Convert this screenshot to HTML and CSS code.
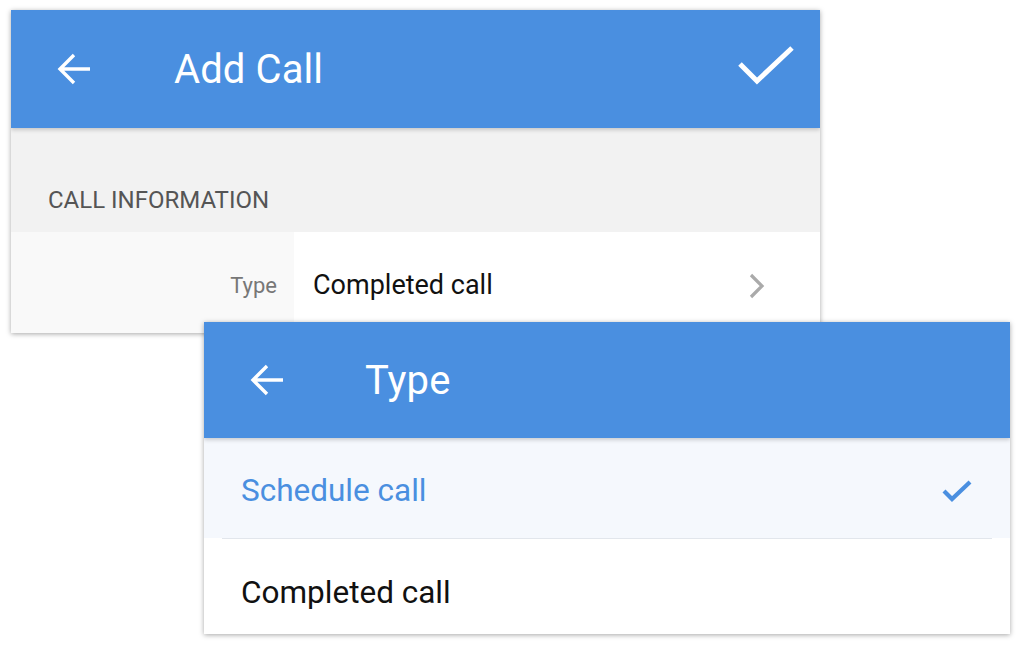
FILE: index.html
```html
<!DOCTYPE html>
<html>
<head>
<meta charset="utf-8">
<link rel="stylesheet" href="styles.css">
</head>
<body>
<div class="stage">
  <div class="card card-main">
    <div class="appbar">
      <svg class="icon-back" viewBox="0 0 36 36" width="36" height="36"><path d="M34 18H5M18 4L4 18l14 14" fill="none" stroke="#fff" stroke-width="3.4" stroke-linecap="butt"/></svg>
      <div class="title">Add Call</div>
      <svg class="icon-done" viewBox="0 0 56 40" width="56" height="40"><path d="M2 18l17 17L54 2" fill="none" stroke="#fff" stroke-width="5"/></svg>
    </div>
    <div class="section">CALL INFORMATION</div>
    <div class="field">
      <div class="field-label">Type</div>
      <div class="field-value">
        <span>Completed call</span>
        <svg class="chev" viewBox="0 0 20 26" width="20" height="26"><path d="M4 2l11 11L4 24" fill="none" stroke="#aaa" stroke-width="3.2"/></svg>
      </div>
    </div>
  </div>

  <div class="card card-pick">
    <div class="appbar appbar-2">
      <svg class="icon-back" viewBox="0 0 36 36" width="36" height="36"><path d="M34 18H5M18 4L4 18l14 14" fill="none" stroke="#fff" stroke-width="3.4"/></svg>
      <div class="title title-2">Type</div>
    </div>
    <div class="option option-selected">
      <span>Schedule call</span>
      <svg class="tick" viewBox="0 0 30 24" width="30" height="24"><path d="M2 12l8 8L28 3" fill="none" stroke="#4a8fe0" stroke-width="4.2"/></svg>
    </div>
    <div class="divider"></div>
    <div class="option option-plain">
      <span>Completed call</span>
    </div>
  </div>
</div>
</body>
</html>
```

FILE: styles.css
```css
* { box-sizing: border-box; }
html, body { margin: 0; padding: 0; background: #fff; }
body { font-family: Roboto, "Noto Sans", "Liberation Sans", sans-serif; }

.stage { position: relative; width: 1022px; height: 652px; }

.card {
  position: absolute;
  background: #fff;
  box-shadow: 0 1px 5px rgba(0,0,0,0.35);
  overflow: hidden;
}

.card-main { left: 11px; top: 10px; width: 809px; height: 323px; }
.card-pick { left: 204px; top: 322px; width: 806px; height: 312px; display: flex; flex-direction: column; }

.appbar {
  height: 118px;
  background: #4a8fe0;
  display: flex;
  align-items: center;
  padding-left: 45px;
  padding-right: 26px;
  position: relative;
  box-shadow: 0 2px 4px rgba(0,0,0,0.18);
  z-index: 1;
}
.appbar-2 { height: 116px; padding-left: 45px; }

.icon-back { flex: none; }
.title {
  color: #fff;
  font-size: 40px;
  line-height: 1;
  margin-left: 82px;
  flex: 1;
  letter-spacing: 0.1px;
  padding-top: 2px;
}
.title-2 { margin-left: 80px; padding-top: 3px; }
.icon-done { flex: none; margin-top: -6px; }

.section {
  background: #f2f2f2;
  height: 104px;
  padding: 58px 0 0 37px;
  font-size: 24px;
  line-height: 28px;
  color: #555;
}

.field { display: flex; height: 101px; }
.field-label {
  width: 283px;
  background: #f9f9f9;
  text-align: right;
  padding: 41px 17px 0 0;
  font-size: 22px;
  line-height: 26px;
  color: #777;
}
.field-value {
  flex: 1;
  display: flex;
  justify-content: space-between;
  padding: 38px 53px 0 19px;
  font-size: 27px;
  line-height: 30px;
  color: #111;
}
.chev { margin-top: 3px; }

.option {
  height: 95px;
  display: flex;
  align-items: center;
  justify-content: space-between;
  padding: 0 38px 0 37px;
  font-size: 31.5px;
  color: #111;
}
.option-selected {
  height: 101px;
  padding-top: 6px;
  background: #f5f8fd;
  color: #4a8fe0;
}
.option-plain { padding-top: 12px; }
.divider { height: 1px; background: #e2e6ec; margin: 0 18px; }
```
